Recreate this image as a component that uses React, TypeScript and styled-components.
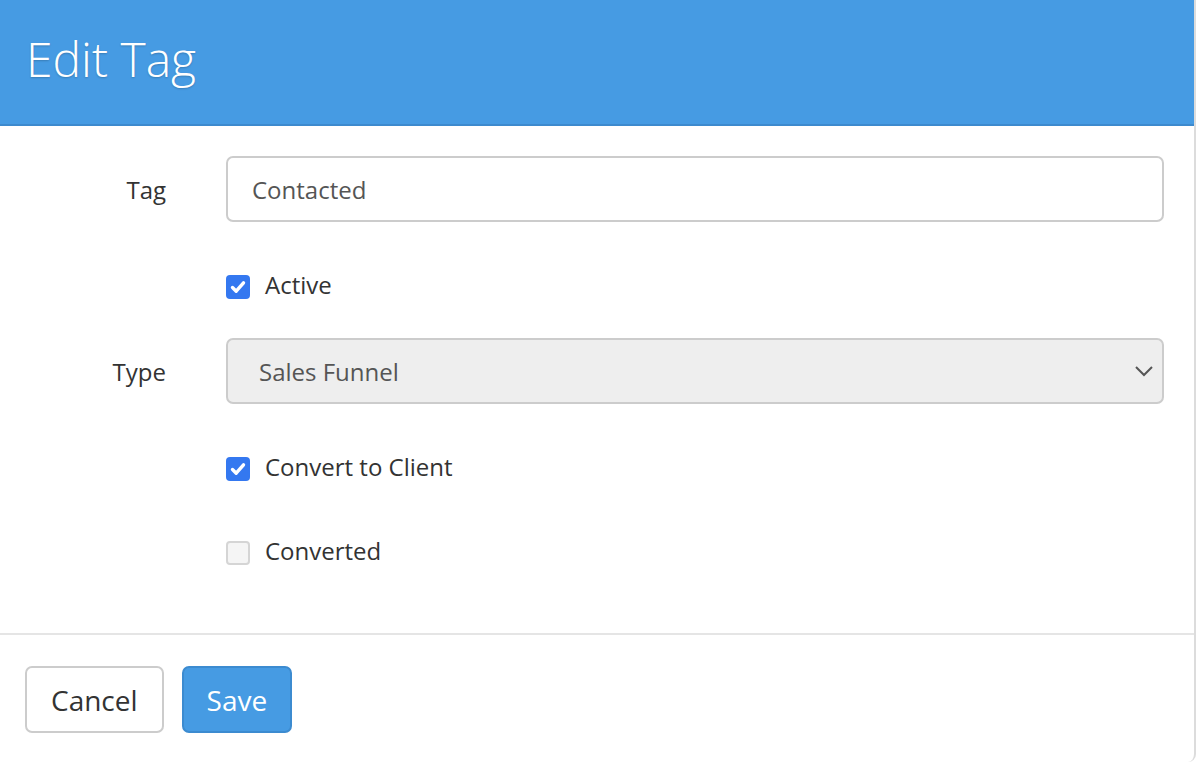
import React from "react";
import styled, { createGlobalStyle } from "styled-components";

const GlobalStyle = createGlobalStyle`
    html, body {
        margin: 0;
        padding: 0;
        background: #ffffff;
    }
    body {
        font-family: "Open Sans", "Liberation Sans", sans-serif;
        color: #333333;
    }
`;

const Modal = styled.div`
    width: 1196px;
    height: 762px;
    box-sizing: border-box;
    display: flex;
    flex-direction: column;
    background: #ffffff;
    border-right: 2px solid #dcdcdc;
    border-bottom-right-radius: 8px;
    overflow: hidden;
`;

const Header = styled.div`
    flex: none;
    height: 126px;
    box-sizing: border-box;
    background: #469be3;
    border-bottom: 2px solid #3d8ace;
    padding: 28px 26px 0;
    margin-right: -2px;
`;

const Title = styled.h1`
    margin: 0;
    font-family: "Open Sans", sans-serif;
    font-weight: 300;
    font-size: 48px;
    line-height: 62px;
    color: #ffffff;
    text-shadow: 0 1px 2px rgba(0, 0, 0, 0.2);
`;

const Body = styled.form`
    padding: 30px 30px 68px 0;
    display: flex;
    flex-direction: column;
    border-bottom: 2px solid #e5e5e5;
`;

const Row = styled.div<{ gap?: number }>`
    display: grid;
    grid-template-columns: 166px 1fr;
    column-gap: 60px;
    align-items: center;
    margin-bottom: ${({ gap }) => gap ?? 0}px;
`;

const Label = styled.label`
    justify-self: end;
    font-size: 24px;
    color: #333333;
`;

const TextInput = styled.input`
    height: 66px;
    box-sizing: border-box;
    border: 2px solid #cccccc;
    border-radius: 7px;
    padding: 0 24px;
    font-family: "Open Sans", sans-serif;
    font-size: 24px;
    color: #555555;
    background: #ffffff;
    outline: none;
`;

const SelectBox = styled.div`
    position: relative;
    height: 66px;
    box-sizing: border-box;
    border: 2px solid #cccccc;
    border-radius: 7px;
    background: #eeeeee;
    display: flex;
    align-items: center;
    padding: 0 31px;
    font-size: 24px;
    color: #555555;
`;

const Chevron = styled.svg`
    position: absolute;
    right: 8px;
    top: 50%;
    margin-top: -7px;
`;

const CheckRow = styled.label`
    display: flex;
    align-items: center;
    gap: 15px;
    font-size: 24px;
    line-height: 24px;
    color: #333333;
    height: 24px;
`;

const CheckText = styled.span`
    margin-top: -5px;
`;

const Box = styled.span<{ checked?: boolean }>`
    flex: none;
    width: 24px;
    height: 24px;
    box-sizing: border-box;
    border-radius: 4px;
    display: inline-flex;
    align-items: center;
    justify-content: center;
    background: ${({ checked }) => (checked ? "#3478f0" : "#f5f5f5")};
    border: ${({ checked }) => (checked ? "none" : "2px solid #d5d5d5")};
`;

const Footer = styled.div`
    display: flex;
    align-items: center;
    gap: 18px;
    padding: 31px 25px;
`;

const Button = styled.button<{ primary?: boolean }>`
    height: 67px;
    box-sizing: border-box;
    border-radius: 7px;
    font-family: "Open Sans", sans-serif;
    font-size: 28px;
    padding: 0 ${({ primary }) => (primary ? 23 : 24)}px;
    background: ${({ primary }) => (primary ? "#469be3" : "#ffffff")};
    color: ${({ primary }) => (primary ? "#ffffff" : "#333333")};
    border: 2px solid ${({ primary }) => (primary ? "#3c8bd0" : "#cccccc")};
    cursor: pointer;
`;

const Check: React.FC<{ checked?: boolean; label: string }> = ({ checked, label }) => (
    <CheckRow>
        <Box checked={checked}>
            {checked && (
                <svg width="18" height="18" viewBox="0 0 18 18">
                    <path
                        d="M3.5 9.5 L7.2 13.2 L14.5 4.8"
                        fill="none"
                        stroke="#ffffff"
                        strokeWidth="3.4"
                        strokeLinecap="round"
                        strokeLinejoin="round"
                    />
                </svg>
            )}
        </Box>
        <CheckText>{label}</CheckText>
    </CheckRow>
);

export default function App() {
    return (
        <>
            <GlobalStyle />
            <Modal>
                <Header>
                    <Title>Edit Tag</Title>
                </Header>
                <Body>
                    <Row gap={53}>
                        <Label>Tag</Label>
                        <TextInput defaultValue="Contacted" />
                    </Row>
                    <Row gap={39}>
                        <span />
                        <Check checked label="Active" />
                    </Row>
                    <Row gap={53}>
                        <Label>Type</Label>
                        <SelectBox>
                            Sales Funnel
                            <Chevron width="20" height="14" viewBox="0 0 20 14">
                                <path d="M2 3 L10 11 L18 3" fill="none" stroke="#555" strokeWidth="2" />
                            </Chevron>
                        </SelectBox>
                    </Row>
                    <Row gap={60}>
                        <span />
                        <Check checked label="Convert to Client" />
                    </Row>
                    <Row>
                        <span />
                        <Check label="Converted" />
                    </Row>
                </Body>
                <Footer>
                    <Button>Cancel</Button>
                    <Button primary>Save</Button>
                </Footer>
            </Modal>
        </>
    );
}
